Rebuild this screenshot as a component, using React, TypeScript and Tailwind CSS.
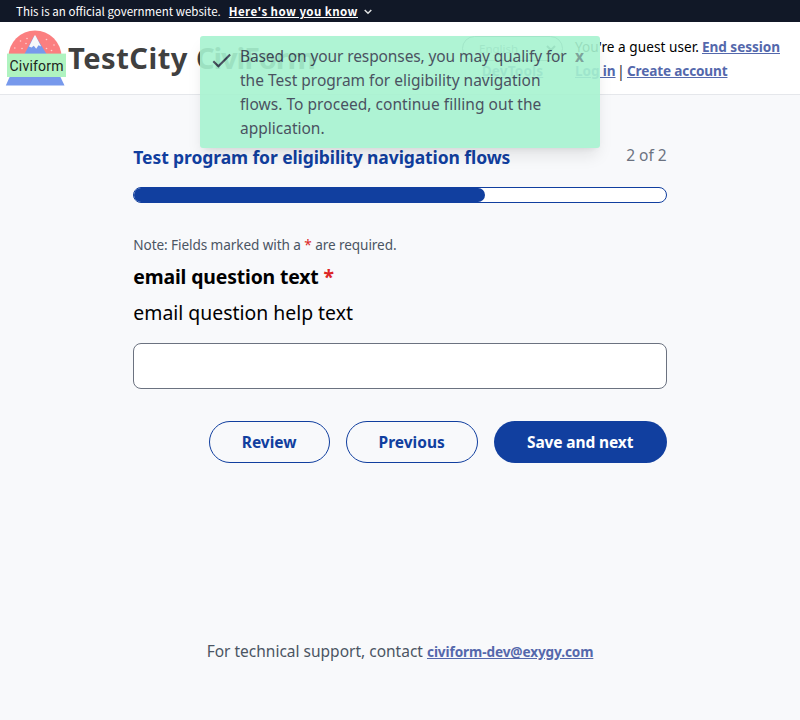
function Logo() {
  return (
    <svg width="62" height="58" viewBox="0 0 62 58" className="shrink-0" aria-label="Civiform">
      <path d="M3.500 28 A26.500 26.500 0 0 1 56.500 28 Z" fill="#fb7f80" />
      <path d="M19.500 25 L28.500 8 Q29.800 5.500 31.200 8 L41.500 25 Z" fill="#7799ec" />
      <path d="M24 17.500 L29 7.500 Q30 5 31 7.500 L36.200 17.500 L33.500 16.300 L31.200 19.700 L28.800 16.800 L26.500 18.500 Z" fill="#f8f8fa" />
      <g fill="#fdd0d0">
        <circle cx="22" cy="9.500" r="0.8" />
        <circle cx="15.500" cy="12" r="0.8" />
        <circle cx="21" cy="14.500" r="0.8" />
        <circle cx="9.800" cy="19" r="0.8" />
        <circle cx="17" cy="19.500" r="0.8" />
        <circle cx="41.500" cy="10.500" r="0.8" />
        <circle cx="49" cy="16" r="0.8" />
        <circle cx="41.500" cy="19.500" r="0.8" />
        <circle cx="46.500" cy="21.500" r="0.8" />
      </g>
      <path d="M5.500 46 H54.500 L59.500 56.500 H0.800 Z" fill="#7799ec" />
      <rect x="2" y="24.600" width="59" height="23.400" fill="#aff3c0" />
      <text x="4.500" y="42.300" textLength="54" fontSize="14" fill="#202420" fontFamily="Roboto, sans-serif">
        Civiform
      </text>
    </svg>
  );
}

function TopBar() {
  return (
    <div className="flex h-[22px] items-center bg-[#111827] pl-4 font-['Noto_Sans_CJK_SC',sans-serif] text-[11.56px] leading-[22px] text-white">
      <span>This is an official government website.</span>
      <a className="ml-2 font-bold tracking-[0.42px] underline">Here's how you know</a>
      <svg width="8" height="6" viewBox="0 0 8 6" className="ml-1.5 mt-0.5" fill="none" stroke="#dfe1e2" strokeWidth="1.500">
        <path d="M0.700 1 L4 4.300 L7.300 1" />
      </svg>
    </div>
  );
}

function Header() {
  return (
    <header className="flex h-[73px] justify-between border-b border-[#e5e7eb] bg-white pr-5 pl-[5px]">
      <div className="flex items-center">
        <Logo />
        <h1 className="mt-0.5 ml-px text-[29.1px] font-bold whitespace-nowrap text-[#404040]">
          <span className="tracking-[0.5px]">TestCity </span>
          <span className="tracking-[-1.2px]">CiviForm</span>
        </h1>
      </div>
      <div className="flex text-[13.6px] leading-6">
        <div className="mr-3 flex w-[101px] flex-col items-center pt-3.5">
          <div className="flex h-[25px] w-full items-center justify-between rounded-full border border-gray-500 pr-1.5 pl-4 text-[11.5px] text-gray-500">
            English
            <svg width="10" height="7" viewBox="0 0 10 7" fill="none" stroke="#374151" strokeWidth="2">
              <path d="M1 1 L5 5 L9 1" />
            </svg>
          </div>
          <a className="-mt-0.5 font-bold tracking-[0.15px] text-[#5468ac] underline">DevTools</a>
        </div>
        <div className="w-[205px] pt-[13px] whitespace-nowrap">
          <div className="flex justify-between">
            <span className="tracking-[0.04px]">You're a guest user.</span>
            <a className="font-bold tracking-[-0.05px] text-[#5468ac] underline">End session</a>
          </div>
          <div className="flex">
            <a className="w-[40px] font-bold tracking-[-0.1px] text-[#5468ac] underline">Log in</a>
            <span className="w-3 text-center text-base leading-6 text-[#404040]">|</span>
            <a className="font-bold tracking-[-0.15px] text-[#5468ac] underline">Create account</a>
          </div>
        </div>
      </div>
    </header>
  );
}

function Toast() {
  return (
    <div className="absolute top-9 left-[200px] flex h-28 w-[400px] rounded-[3px] bg-[#a7f3d0] py-2 text-[15.5px] leading-6 whitespace-nowrap text-[#374151] opacity-90 shadow-lg">
      <svg width="25" height="25" viewBox="0 0 24 24" fill="currentColor" className="mt-1 ml-[9px]">
        <path d="M9 16.170 4.830 12l-1.420 1.410L9 19 21 7l-1.410-1.410z" />
      </svg>
      <div className="ml-1.5 w-[335px]">
        <div className="tracking-[-0.11px]">Based on your responses, you may qualify for</div>
        <div>the Test program for eligibility navigation</div>
        <div className="tracking-[0.04px]">flows. To proceed, continue filling out the</div>
        <div>application.</div>
      </div>
      <button className="h-6 font-bold opacity-50">x</button>
    </div>
  );
}

export default function App() {
  return (
    <div className="relative flex h-[720px] flex-col overflow-hidden bg-[#f8f9fb] font-['Noto_Sans',sans-serif] text-black">
      <TopBar />
      <Header />
      <main className="mx-auto mt-12 flex w-2/3 flex-col">
        <div className="flex h-11 items-start justify-between">
          <h2 className="text-[17.5px] leading-7 font-bold tracking-[-0.095px] text-[#113f9f]">
            Test program for eligibility navigation flows
          </h2>
          <span className="text-[15.5px] leading-6 text-[#6b7280]">2 of 2</span>
        </div>
        <div className="h-4 rounded-full border border-[#113f9f] bg-white">
          <div className="h-full w-[66%] rounded-full bg-[#113f9f]" />
        </div>
        <p className="mt-8 text-[13.6px] leading-5 tracking-[-0.09px] text-[#4b5563]">
          Note: Fields marked with a <span className="text-[#dc2626]">*</span> are required.
        </p>
        <label className="mt-2 text-[19.4px] leading-7 font-bold tracking-[-0.15px]">
          email question text <span className="text-[#dc2626]">*</span>
        </label>
        <p className="mt-2 text-[19.4px] leading-7">email question help text</p>
        <input className="mt-4 h-[46px] rounded-lg border border-[#6b7280] bg-white px-3 outline-none" />
        <div className="mt-8 flex justify-end gap-4 text-[15.5px] leading-6 font-bold text-[#113f9f]">
          <button className="h-[42px] w-[121px] rounded-full border border-[#113f9f]">Review</button>
          <button className="h-[42px] w-[132px] rounded-full border border-[#113f9f]">Previous</button>
          <button className="h-[42px] w-[173px] rounded-full bg-[#113f9f] tracking-[-0.12px] text-white">Save and next</button>
        </div>
      </main>
      <footer className="mt-44 text-center text-[15.5px] leading-6 text-[#4b5563]">
        For technical support, contact{" "}
        <a className="text-[13.6px] font-bold tracking-[-0.1px] text-[#5468ac] underline">civiform-dev@exygy.com</a>
      </footer>
      <Toast />
    </div>
  );
}
